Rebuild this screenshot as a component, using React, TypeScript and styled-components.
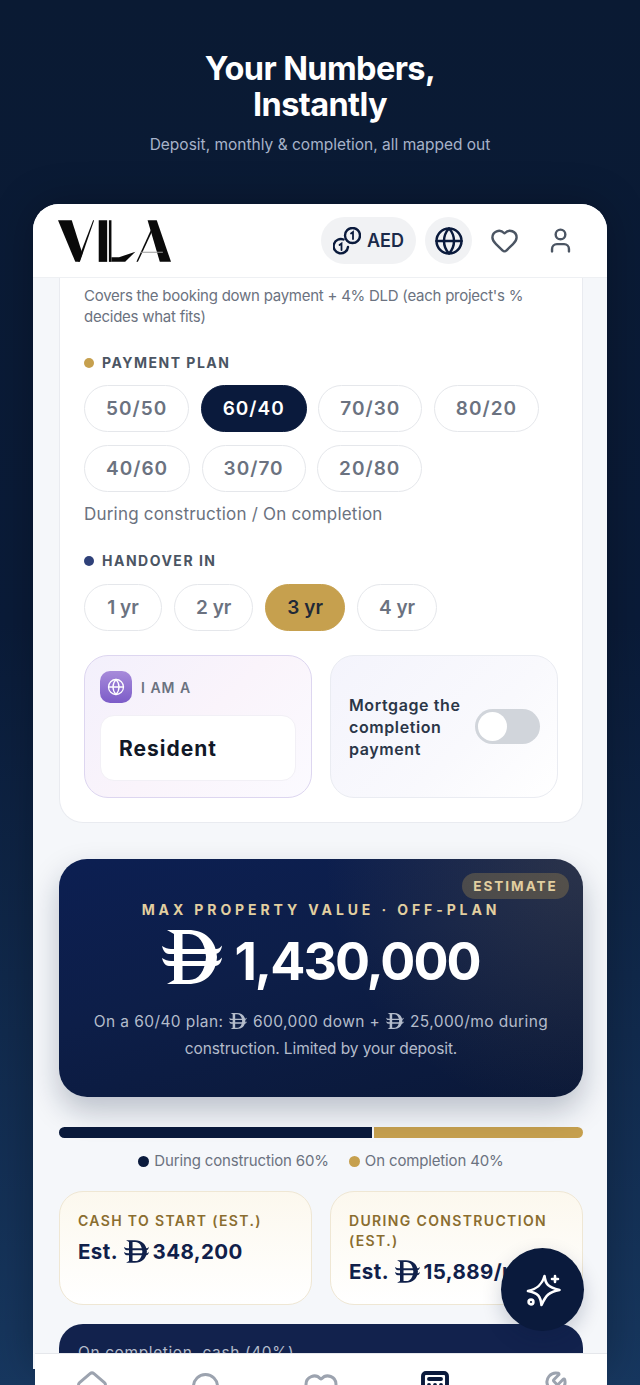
import React from "react";
import styled, { createGlobalStyle } from "styled-components";
import { Globe, Heart, User, Home, Search, Calculator, Wrench } from "lucide-react";

const GlobalStyle = createGlobalStyle`
  html, body {
    margin: 0;
    padding: 0;
    background: #0a1a33;
  }
  * {
    box-sizing: border-box;
  }
`;

const NAVY = "#0a1a3c";
const GOLD = "#c6a04e";

const plans = [
  ["50/50", "60/40", "70/30", "80/20"],
  ["40/60", "30/70", "20/80"],
];
const years = ["1 yr", "2 yr", "3 yr", "4 yr"];

const Dirham: React.FC<{ className?: string }> = ({ className }) => (
  <svg className={className} viewBox="0 0 60 54" aria-hidden="true">
    <path
      fillRule="evenodd"
      d="M5 0H26C43 0 54 10 55 27C54 44 43 54 26 54H5L12 50V4ZM20.500 4V50H27C37 50 43 41 44 27C43 13 37 4 27 4Z"
    />
    <path d="M0 16C3 18 6 19 9 19H54C56.500 19 58 18 60 15.500C59.500 20 57 24 53 24H7C3 24 1 20 0 16Z" />
    <path d="M0 28C3 30 6 31 9 31H54C56.500 31 58 30 60 27.500C59.500 32 57 36 53 36H7C3 36 1 32 0 28Z" />
  </svg>
);

const BigDirham = styled(Dirham)`
  width: 60px;
  height: 54px;
  fill: currentColor;
  margin-right: 12px;
  vertical-align: -4px;
`;

const NoteDirham = styled(Dirham)`
  width: 18px;
  height: 16px;
  fill: currentColor;
  margin: 0 6px 0 1px;
  vertical-align: -2px;
`;

const CashDirham = styled(Dirham)`
  width: 25px;
  height: 23px;
  fill: currentColor;
  margin: 0 4px 0 1px;
  vertical-align: -4px;
`;

const Logo = () => (
  <LogoSvg viewBox="0 0 111 41" role="img" aria-label="VILA">
    <path d="M0 0H13.500L24 33L21 41H17Z" />
    <path d="M20 38L34.500 0H35.500L21.500 41H20Z" />
    <path d="M40 0H48.300V41H40Z" />
    <path d="M50 0H52.500V41H50Z" />
    <path d="M52.500 41H66L76 31L60 36.500H52.500Z" />
    <path d="M77 41L92 8L93 10L78.500 41Z" />
    <path d="M88 0H97L111 41H100Z" />
    <path d="M81 31H103V32H81Z" fill="#9a9a9a" />
  </LogoSvg>
);

const CoinsIcon = () => (
  <svg width="28" height="28" viewBox="0 0 28 28" fill="none" stroke={NAVY} strokeWidth="2.400" strokeLinecap="round">
    <circle cx="19.500" cy="8.500" r="7.500" />
    <path d="M18 6.500L20 5V12" strokeWidth="1.800" />
    <path d="M10.500 12.500A7.200 7.200 0 1 0 15 20" />
    <path d="M6.500 18L8.500 16.500V23" strokeWidth="1.800" />
  </svg>
);

const SparkIcon = () => (
  <svg width="36" height="36" viewBox="0 0 36 36" fill="none" stroke="#fff" strokeWidth="2.600" strokeLinecap="round" strokeLinejoin="round">
    <path d="M19.500 4C20.500 12 22.500 15 34.500 18C24 20 21 23 16.500 33C15.500 24 13 21 3 19C12 17 17 13 19.500 4Z" />
    <path d="M30 4V10M27 7H33" />
    <circle cx="6" cy="30" r="2.400" />
  </svg>
);

export default function App() {
  return (
    <Page>
      <GlobalStyle />
      <Hero>
        <Title>
          Your Numbers,
          <br />
          Instantly
        </Title>
        <Subtitle>Deposit, monthly &amp; completion, all mapped out</Subtitle>
      </Hero>

      <Phone>
        <PhoneHeader>
          <Logo />
          <HeaderActions>
            <CurrencyPill>
              <CoinsIcon />
              AED
            </CurrencyPill>
            <LangButton>
              <Globe size={30} color={NAVY} strokeWidth={2} />
            </LangButton>
            <PlainIcon>
              <Heart size={29} color="#4b5563" strokeWidth={2} />
            </PlainIcon>
            <PlainIcon>
              <User size={29} color="#4b5563" strokeWidth={2} />
            </PlainIcon>
          </HeaderActions>
        </PhoneHeader>

        <Scroll>
          <FormCard>
            <Hint>Covers the booking down payment + 4% DLD (each project's % decides what fits)</Hint>

            <SectionLabel $dot={GOLD}>Payment plan</SectionLabel>
            <ChipStack>
              {plans.map((row, i) => (
                <ChipRow key={i}>
                  {row.map((p) => (
                    <Chip key={p} $active={p === "60/40"}>
                      {p}
                    </Chip>
                  ))}
                </ChipRow>
              ))}
            </ChipStack>
            <PlanCaption>During construction / On completion</PlanCaption>

            <SectionLabel $dot="#2f4179">Handover in</SectionLabel>
            <YearRow>
              {years.map((y) => (
                <YearChip key={y} $active={y === "3 yr"}>
                  {y}
                </YearChip>
              ))}
            </YearRow>

            <OptionGrid>
              <ResidentCard>
                <ResidentHead>
                  <PurpleBadge>
                    <Globe size={18} color="#fff" strokeWidth={1.700} />
                  </PurpleBadge>
                  I AM A
                </ResidentHead>
                <ResidentValue>Resident</ResidentValue>
              </ResidentCard>
              <MortgageCard>
                <MortgageText>Mortgage the completion payment</MortgageText>
                <Toggle>
                  <Knob />
                </Toggle>
              </MortgageCard>
            </OptionGrid>
          </FormCard>

          <EstimateCard>
            <EstimateBadge>ESTIMATE</EstimateBadge>
            <EstimateLabel>MAX PROPERTY VALUE · OFF-PLAN</EstimateLabel>
            <EstimateValue>
              <BigDirham />
              1,430,000
            </EstimateValue>
            <EstimateNote>
              <NoteFirst>
                On a 60/40 plan: <NoteDirham />600,000 down + <NoteDirham />25,000/mo during
              </NoteFirst>
              <NoteSecond>construction. Limited by your deposit.</NoteSecond>
            </EstimateNote>
          </EstimateCard>

          <SplitBar>
            <SplitNavy />
            <SplitGold />
          </SplitBar>
          <Legend>
            <LegendItem $dot={NAVY}>During construction 60%</LegendItem>
            <LegendItem $dot={GOLD}>On completion 40%</LegendItem>
          </Legend>

          <CashGrid>
            <CashCard>
              <CashLabel>CASH TO START (EST.)</CashLabel>
              <CashValue>
                Est. <CashDirham />348,200
              </CashValue>
            </CashCard>
            <CashCard>
              <CashLabel>DURING CONSTRUCTION (EST.)</CashLabel>
              <CashValue>
                Est. <CashDirham />15,889/mo
              </CashValue>
            </CashCard>
          </CashGrid>

          <CompletionCard>On completion, cash (40%)</CompletionCard>
        </Scroll>
      </Phone>

      <Fab>
        <SparkIcon />
      </Fab>

      <BottomNav>
        <NavSlot><Home size={36} color="#9ca3af" strokeWidth={2} /></NavSlot>
        <NavSlot><Search size={36} color="#9ca3af" strokeWidth={2} /></NavSlot>
        <NavSlot><Heart size={36} color="#9ca3af" strokeWidth={2} /></NavSlot>
        <NavSlot><Calculator size={36} color={NAVY} strokeWidth={2.600} /></NavSlot>
        <NavSlot><Wrench size={36} color="#9ca3af" strokeWidth={2} /></NavSlot>
      </BottomNav>
    </Page>
  );
}

const Page = styled.div`
  position: relative;
  width: 640px;
  height: 1385px;
  overflow: hidden;
  background: linear-gradient(180deg, #0a1a33 0%, #0a1b38 45%, #17375f 100%);
  font-family: Inter, "Noto Sans", sans-serif;
`;

const Hero = styled.div`
  height: 204px;
  padding-top: 51px;
  text-align: center;
`;

const Title = styled.h1`
  margin: 0;
  font-size: 32.500px;
  line-height: 36px;
  font-weight: 700;
  letter-spacing: -0.6px;
  color: #fff;
`;

const Subtitle = styled.p`
  margin: 11px 0 0;
  font-size: 15.500px;
  line-height: 22px;
  color: #a7b3c9;
`;

const Phone = styled.div`
  width: 574px;
  height: 1165px;
  margin-left: 33px;
  border-radius: 26px 26px 0 0;
  background: #f5f7fa;
  overflow: hidden;
  box-shadow: 0 0 40px rgba(0, 0, 0, 0.25);
`;

const PhoneHeader = styled.div`
  height: 74px;
  padding: 0 23px 0 25px;
  display: flex;
  align-items: center;
  justify-content: space-between;
  background: #fff;
  border-bottom: 1px solid #eef0f3;
`;

const LogoSvg = styled.svg`
  width: 113px;
  height: 42px;
  fill: #0a0a0a;
`;

const HeaderActions = styled.div`
  display: flex;
  align-items: center;
  gap: 9px;
`;

const CurrencyPill = styled.div`
  height: 47px;
  width: 95px;
  border-radius: 24px;
  background: #f1f2f4;
  display: flex;
  align-items: center;
  justify-content: center;
  gap: 6px;
  font-size: 18px;
  font-weight: 600;
  color: #1b2a4a;
`;

const LangButton = styled.div`
  width: 47px;
  height: 47px;
  border-radius: 50%;
  background: #f1f2f4;
  display: flex;
  align-items: center;
  justify-content: center;
`;

const PlainIcon = styled.div`
  width: 47px;
  height: 47px;
  display: flex;
  align-items: center;
  justify-content: center;
`;

const Scroll = styled.div`
  padding: 0 24px 0 26px;
`;

const FormCard = styled.section`
  padding: 7px 24px 24px;
  background: #fff;
  border: 1px solid #e9ebf0;
  border-top: 0;
  border-radius: 0 0 24px 24px;
`;

const Hint = styled.p`
  margin: 0 0 26px;
  font-size: 15px;
  line-height: 21px;
  letter-spacing: -0.25px;
  color: #6b7280;
`;

const SectionLabel = styled.div<{ $dot: string }>`
  display: flex;
  align-items: center;
  gap: 8px;
  margin-bottom: 12px;
  font-size: 14px;
  line-height: 20px;
  font-weight: 700;
  letter-spacing: 1.500px;
  text-transform: uppercase;
  color: #4b5563;

  &::before {
    content: "";
    width: 10px;
    height: 10px;
    border-radius: 50%;
    background: ${(p) => p.$dot};
  }
`;

const ChipStack = styled.div`
  display: flex;
  flex-direction: column;
  gap: 13px;
  margin-bottom: 10px;
`;

const ChipRow = styled.div`
  display: flex;
  gap: 11.500px;
`;

const YearRow = styled(ChipRow)`
  gap: 12px;
  margin-top: 13px;
`;

const Chip = styled.div<{ $active?: boolean }>`
  height: 47px;
  padding: 0 21px;
  display: flex;
  align-items: center;
  justify-content: center;
  border-radius: 24px;
  border: 1.500px solid ${(p) => (p.$active ? NAVY : "#e5e7eb")};
  background: ${(p) => (p.$active ? NAVY : "#fff")};
  color: ${(p) => (p.$active ? "#fff" : "#6b7280")};
  font-size: 19px;
  font-weight: 600;
  letter-spacing: 1px;
`;

const YearChip = styled(Chip)<{ $active?: boolean }>`
  min-width: 78px;
  border-color: ${(p) => (p.$active ? GOLD : "#e5e7eb")};
  background: ${(p) => (p.$active ? GOLD : "#fff")};
  color: ${(p) => (p.$active ? "#1f2937" : "#6b7280")};
  letter-spacing: 0;
`;

const PlanCaption = styled.p`
  margin: 0 0 25px;
  font-size: 17px;
  line-height: 24px;
  letter-spacing: 0.2px;
  color: #6b7280;
`;

const OptionGrid = styled.div`
  display: grid;
  grid-template-columns: 1fr 1fr;
  gap: 18px;
  margin-top: 24px;
`;

const ResidentCard = styled.div`
  height: 143px;
  padding: 15px;
  border-radius: 24px;
  border: 1.500px solid #ddd6f0;
  background: linear-gradient(135deg, #f3f0fc 0%, #faf4fb 50%, #fbfaff 100%);
`;

const ResidentHead = styled.div`
  display: flex;
  align-items: center;
  gap: 9px;
  font-size: 14px;
  font-weight: 600;
  letter-spacing: 1px;
  color: #6b7280;
`;

const PurpleBadge = styled.div`
  width: 32px;
  height: 32px;
  border-radius: 10px;
  background: linear-gradient(180deg, #a78bda 0%, #7c5cc8 100%);
  display: flex;
  align-items: center;
  justify-content: center;
`;

const ResidentValue = styled.div`
  height: 66px;
  margin-top: 12px;
  padding-left: 18px;
  display: flex;
  align-items: center;
  border-radius: 14px;
  border: 1px solid #f2f0f6;
  background: #fff;
  font-size: 21px;
  font-weight: 700;
  letter-spacing: 1px;
  color: #111827;
`;

const MortgageCard = styled.div`
  height: 143px;
  padding: 0 17px 0 18px;
  display: flex;
  align-items: center;
  gap: 8px;
  border-radius: 24px;
  border: 1.500px solid #eaecf2;
  background: linear-gradient(135deg, #f4f4fc 0%, #f9f9fd 60%, #ffffff 100%);
`;

const MortgageText = styled.div`
  flex: 1;
  font-size: 16px;
  line-height: 22px;
  font-weight: 600;
  letter-spacing: 0.6px;
  color: #2b3648;
`;

const Toggle = styled.div`
  width: 65px;
  height: 35px;
  flex-shrink: 0;
  padding: 3px;
  border-radius: 18px;
  background: #d1d5db;
`;

const Knob = styled.div`
  width: 29px;
  height: 29px;
  border-radius: 50%;
  background: #fff;
`;

const EstimateCard = styled.section`
  position: relative;
  height: 238px;
  margin-top: 36px;
  padding-top: 42px;
  border-radius: 28px;
  text-align: center;
  background:
    radial-gradient(circle at 100% 0%, rgba(198, 160, 78, 0.16), transparent 45%),
    linear-gradient(165deg, #0c1f52 0%, #0d1e48 45%, #0a1838 100%);
  box-shadow: 0 14px 30px rgba(10, 26, 60, 0.25);
`;

const EstimateBadge = styled.div`
  position: absolute;
  top: 14px;
  right: 14px;
  width: 107px;
  height: 26px;
  border-radius: 13px;
  display: flex;
  align-items: center;
  justify-content: center;
  background: rgba(198, 160, 78, 0.28);
  color: #e2cfa0;
  font-size: 13.500px;
  font-weight: 700;
  letter-spacing: 2px;
`;

const EstimateLabel = styled.div`
  font-size: 14px;
  line-height: 18px;
  font-weight: 700;
  letter-spacing: 3.900px;
  color: #e2cfa0;
`;

const EstimateValue = styled.div`
  margin-top: 11px;
  font-size: 52px;
  line-height: 62px;
  font-weight: 700;
  letter-spacing: -2px;
  color: #fff;
`;

const EstimateNote = styled.p`
  margin: 15px 0 0;
  font-size: 15.500px;
  line-height: 27px;
  color: #b4bccb;
`;

const NoteFirst = styled.span`
  display: block;
  letter-spacing: 0.4px;
`;

const NoteSecond = styled.span`
  display: block;
  letter-spacing: -0.1px;
`;

const SplitBar = styled.div`
  display: flex;
  gap: 2px;
  height: 11px;
  margin-top: 30px;
  border-radius: 6px;
  overflow: hidden;
`;

const SplitNavy = styled.div`
  flex: 60;
  background: ${NAVY};
`;

const SplitGold = styled.div`
  flex: 40;
  background: ${GOLD};
`;

const Legend = styled.div`
  display: flex;
  justify-content: center;
  gap: 20px;
  margin-top: 12px;
  margin-bottom: 19px;
`;

const LegendItem = styled.div<{ $dot: string }>`
  display: flex;
  align-items: center;
  gap: 5px;
  font-size: 15px;
  line-height: 22px;
  letter-spacing: -0.15px;
  color: #6b7280;

  &::before {
    content: "";
    width: 11px;
    height: 11px;
    border-radius: 50%;
    background: ${(p) => p.$dot};
  }
`;

const CashGrid = styled.div`
  display: grid;
  grid-template-columns: 1fr 1fr;
  gap: 18px;
`;

const CashCard = styled.div`
  height: 114px;
  padding: 19px 18px 0;
  border-radius: 24px;
  border: 1.500px solid #efe7d4;
  background: linear-gradient(180deg, #fcf8ee 0%, #ffffff 100%);
`;

const CashLabel = styled.div`
  font-size: 14px;
  line-height: 20px;
  font-weight: 600;
  letter-spacing: 1.350px;
  color: #8a6d2f;
`;

const CashValue = styled.div`
  margin-top: 8px;
  font-size: 20.500px;
  line-height: 26px;
  font-weight: 700;
  letter-spacing: 0.4px;
  color: #10204a;
  white-space: nowrap;
`;

const CompletionCard = styled.div`
  height: 90px;
  margin-top: 19px;
  padding: 18px 19px;
  border-radius: 24px 24px 0 0;
  background: #12224d;
  color: #b4bccb;
  font-size: 15.500px;
  line-height: 22px;
  letter-spacing: 0.6px;
`;

const Fab = styled.div`
  position: absolute;
  left: 501px;
  top: 1248px;
  width: 83px;
  height: 83px;
  border-radius: 50%;
  background: ${NAVY};
  display: flex;
  align-items: center;
  justify-content: center;
  box-shadow: 0 8px 20px rgba(10, 26, 60, 0.2);
`;

const BottomNav = styled.nav`
  position: absolute;
  left: 35px;
  top: 1353px;
  width: 572px;
  height: 60px;
  display: grid;
  grid-template-columns: repeat(5, 1fr);
  background: #fff;
  border-top: 1px solid #e5e7eb;
`;

const NavSlot = styled.div`
  display: flex;
  justify-content: center;
  padding-top: 16px;
`;
